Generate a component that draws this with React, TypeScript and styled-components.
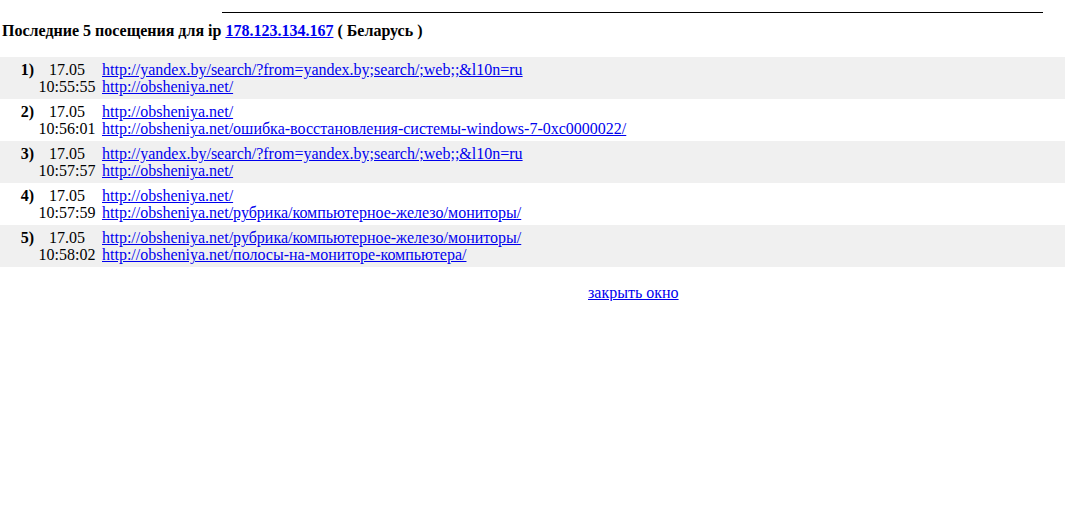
import React from 'react'
import styled, { createGlobalStyle } from 'styled-components'

const GlobalStyle = createGlobalStyle`
  html, body {
    margin: 0;
    padding: 0;
    background: #fff;
  }
  body {
    font-family: 'Liberation Serif', 'Times New Roman', serif;
    font-size: 16px;
    line-height: 17px;
    color: #000;
  }
  a {
    color: #0000ee;
    text-decoration: underline;
  }
`

const Page = styled.div`
  width: 1065px;
  padding-top: 12px;
`

const TopLine = styled.div`
  margin-left: 222px;
  width: 821px;
  height: 1px;
  background: #000;
`

const Titulo = styled.h1`
  margin: 9px 0 0 2px;
  font-size: 16px;
  line-height: 17px;
  font-weight: 700;
`

const Lista = styled.div`
  margin-top: 18px;
  display: flex;
  flex-direction: column;
`

const Linha = styled.div<{ $cinza: boolean }>`
  display: grid;
  grid-template-columns: 36px 62px 1fr;
  padding: 4px 0;
  background: ${p => (p.$cinza ? '#f0f0f0' : '#fff')};
`

const Numero = styled.div`
  font-weight: 700;
  text-align: right;
  padding-right: 2px;
`

const DataHora = styled.div`
  display: flex;
  flex-direction: column;
  align-items: center;
`

const Links = styled.div`
  display: flex;
  flex-direction: column;
  align-items: flex-start;
  padding-left: 4px;
`

const Rodape = styled.div`
  margin-top: 17px;
  padding-left: 588px;
`

const visitas = [
  {
    data: '17.05',
    hora: '10:55:55',
    de: 'http://yandex.by/search/?from=yandex.by;search/;web;;&l10n=ru',
    para: 'http://obsheniya.net/',
  },
  {
    data: '17.05',
    hora: '10:56:01',
    de: 'http://obsheniya.net/',
    para: 'http://obsheniya.net/ошибка-восстановления-системы-windows-7-0xc0000022/',
  },
  {
    data: '17.05',
    hora: '10:57:57',
    de: 'http://yandex.by/search/?from=yandex.by;search/;web;;&l10n=ru',
    para: 'http://obsheniya.net/',
  },
  {
    data: '17.05',
    hora: '10:57:59',
    de: 'http://obsheniya.net/',
    para: 'http://obsheniya.net/рубрика/компьютерное-железо/мониторы/',
  },
  {
    data: '17.05',
    hora: '10:58:02',
    de: 'http://obsheniya.net/рубрика/компьютерное-железо/мониторы/',
    para: 'http://obsheniya.net/полосы-на-мониторе-компьютера/',
  },
]

const App: React.FC = () => {
  return (
    <Page>
      <GlobalStyle />
      <TopLine />
      <Titulo>
        Последние 5 посещения для ip <a href="#">178.123.134.167</a> ( Беларусь )
      </Titulo>

      <Lista>
        {visitas.map((v, i) => (
          <Linha key={i} $cinza={i % 2 === 0}>
            <Numero>{i + 1})</Numero>
            <DataHora>
              <span>{v.data}</span>
              <span>{v.hora}</span>
            </DataHora>
            <Links>
              <a href="#">{v.de}</a>
              <a href="#">{v.para}</a>
            </Links>
          </Linha>
        ))}
      </Lista>

      <Rodape>
        <a href="#">закрыть окно</a>
      </Rodape>
    </Page>
  )
}

export default App
